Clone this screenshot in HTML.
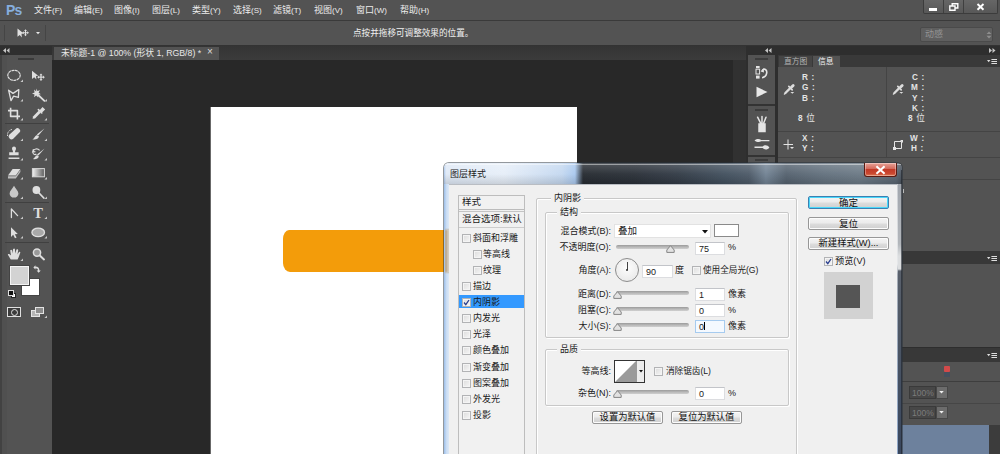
<!DOCTYPE html>
<html lang="zh-CN">
<head>
<meta charset="utf-8">
<title>图层样式</title>
<style>
*{box-sizing:border-box;margin:0;padding:0}
html,body{width:1000px;height:454px;overflow:hidden;background:#282828}
body{position:relative;font-family:"Liberation Sans","Noto Sans CJK SC",sans-serif;font-size:9px;color:#e6e6e6}
.abs{position:absolute}
.t{position:absolute;white-space:nowrap;line-height:12px;height:12px}
svg{position:absolute;overflow:visible}
/* app chrome */
#menubar{left:0;top:0;width:1000px;height:20px;background:#535353}
#optbar{left:0;top:21px;width:1000px;height:24px;background:#535353}
.mi{top:4px;font-size:9px;color:#ececec}
.s{font-size:8px}
#ps{left:6px;top:0px;font-size:15.5px;line-height:20px;height:20px;font-weight:bold;color:#86aede;letter-spacing:-0.8px;transform:scaleX(.9);transform-origin:0 0}
/* dialog */
#dlg{left:444px;top:163px;width:458px;height:300px}
#dbody{left:449px;top:184px;width:448px;height:280px;background:#f0f0f0}
.d{color:#1a1a1a;font-size:9px}
.r{text-align:right}
.ip{font-size:8.2px;font-weight:bold;color:#e4e4e4;letter-spacing:0.2px;word-spacing:1px}
.inp{position:absolute;background:#fff;border:1px solid #dcdde0;border-top-color:#c2c4c9;height:13px}
.inp span{position:absolute;left:3px;top:0px;line-height:12px;font-size:9px;color:#222}
.cb{position:absolute;width:9px;height:9px;background:linear-gradient(135deg,#dcdcdc,#f6f6f6);border:1px solid #b2b3b5;box-shadow:inset 0 0 0 1px #f4f4f4}
.grp{position:absolute;border:1px solid #c8c8c8;box-shadow:inset 1px 1px 0 #fff,1px 1px 0 #fff;border-radius:2px}
.gl{position:absolute;background:#f0f0f0;padding:0 3px;line-height:12px;height:12px;white-space:nowrap;color:#1a1a1a}
.track{position:absolute;height:4px;background:linear-gradient(#9b9b9b,#bdbdbd 60%,#cfcfcf);border-radius:2px}
.btn{position:absolute;border:1px solid #979797;border-radius:2px;background:linear-gradient(#f4f4f4 0%,#ebebeb 48%,#dddddd 52%,#cfcfcf 100%);box-shadow:inset 0 0 0 1px #fcfcfc;color:#111;text-align:center;white-space:nowrap}
.li{left:0;width:66px;height:13px}
</style>
</head>
<body>
<!-- menubar -->
<div id="menubar" class="abs">
  <div id="ps" class="t">Ps</div>
  <div class="t mi" style="left:34px">文件<span class="s">(F)</span></div>
  <div class="t mi" style="left:74px">编辑<span class="s">(E)</span></div>
  <div class="t mi" style="left:114px">图像<span class="s">(I)</span></div>
  <div class="t mi" style="left:152px">图层<span class="s">(L)</span></div>
  <div class="t mi" style="left:192px">类型<span class="s">(Y)</span></div>
  <div class="t mi" style="left:233px">选择<span class="s">(S)</span></div>
  <div class="t mi" style="left:273px">滤镜<span class="s">(T)</span></div>
  <div class="t mi" style="left:314px">视图<span class="s">(V)</span></div>
  <div class="t mi" style="left:356px">窗口<span class="s">(W)</span></div>
  <div class="t mi" style="left:400px">帮助<span class="s">(H)</span></div>
</div>
<div class="abs" style="left:0;top:20px;width:1000px;height:1px;background:#3a3a3a"></div>
<div id="optbar" class="abs">
  <div class="t" style="left:353px;top:6px;font-size:8.6px;color:#f0f0f0">点按并拖移可调整效果的位置。</div>
</div>
<div class="abs" style="left:0;top:45px;width:1000px;height:1px;background:#333"></div>
<!-- window buttons -->
<div class="abs" style="left:923px;top:0;width:75px;height:14px;background:linear-gradient(#666,#585858);border:1px solid #3c3c3c;border-top:none;border-radius:0 0 2px 2px"></div>
<div class="abs" style="left:943px;top:0;width:1px;height:13px;background:#3f3f3f"></div>
<div class="abs" style="left:963px;top:0;width:1px;height:13px;background:#3f3f3f"></div>
<div class="abs" style="left:929px;top:8px;width:8px;height:2.500px;background:#fff"></div>
<svg style="left:949px;top:3px" width="10" height="8" viewBox="0 0 10 8"><path d="M3.200 0.800H8.800V5H3.200Z" fill="none" stroke="#fff" stroke-width="1.400"/><path d="M0.800 3H6V7.200H0.800Z" fill="#5e5e5e" stroke="#fff" stroke-width="1.400"/></svg>
<svg style="left:976px;top:3px" width="9" height="8" viewBox="0 0 9 8"><path d="M1.500 1L7.500 6.800M7.500 1L1.500 6.800" stroke="#fff" stroke-width="1.900"/></svg>
<!-- options bar widgets -->
<svg style="left:17px;top:28px" width="14" height="10" viewBox="0 0 14 10"><path d="M0.500 0.500V8.800L2.700 7L4.900 9.400L4.500 5.800L6.700 5.600Z" fill="#e0e0e0"/><path d="M10 2.800l1.600 1.800h-1v1.400h1.400v-1l1.800 1.600-1.800 1.600v-1h-1.400v1.400h1l-1.600 1.800-1.600-1.800h1v-1.400h-1.400v1l-1.800-1.600 1.800-1.600v1h1.400v-1.400h-1z" fill="#e0e0e0" transform="translate(-0.500,-1.200) scale(0.900)"/></svg>
<svg style="left:36px;top:32px" width="4" height="2.500" viewBox="0 0 5 3"><path d="M0 0h5L2.500 2.800z" fill="#e6e6e6"/></svg>
<div class="abs" style="left:4px;top:25px;width:1px;height:16px;background:#454545"></div>
<div class="abs" style="left:45px;top:25px;width:1px;height:16px;background:#454545"></div>
<div class="abs" style="left:920px;top:27px;width:73px;height:15px;background:#5f5f5f;border:1px solid #4a4a4a;border-radius:2px"></div>
<div class="t" style="left:925px;top:28px;font-size:9px;color:#949494">动感</div>
<svg style="left:986px;top:31px" width="6" height="8" viewBox="0 0 6 8"><path d="M0.500 3L3 0.400L5.500 3ZM0.500 4.800L3 7.400L5.500 4.800Z" fill="#8e8e8e"/></svg>

<!-- tab bar -->
<div class="abs" style="left:52px;top:46px;width:694px;height:14px;background:linear-gradient(#343434,#3b3b3b)"></div>
<div class="abs" style="left:54px;top:47px;width:165px;height:13px;background:#535353"></div>
<div class="t" style="left:61px;top:47px;font-size:8.75px;color:#e8e8e8">未标题-1 @ 100% (形状 1, RGB/8) *</div>
<div class="t" style="left:207px;top:46px;font-size:10px;color:#ddd">×</div>

<!-- left toolbar -->
<div class="abs" style="left:0;top:46px;width:52px;height:9px;background:#2f2f2f"></div>
<svg style="left:3px;top:48px" width="6.500" height="5" viewBox="0 0 6.500 5"><path d="M3 0v5L0 2.500zM6.500 0v5L3.500 2.500z" fill="#c4c4c4"/></svg>
<div class="abs" style="left:0;top:55px;width:52px;height:399px;background:#535353"></div>
<div class="abs" style="left:0;top:55px;width:2px;height:399px;background:#424242"></div>
<div class="abs" style="left:2px;top:55px;width:5px;height:399px;background:#505050"></div>
<div class="abs" style="left:18px;top:58px;width:16px;height:2px;background:#3a3a3a"></div>
<div class="abs" style="left:5px;top:123px;width:44px;height:1px;background:#404040"></div>
<div class="abs" style="left:5px;top:202px;width:44px;height:1px;background:#404040"></div>
<div class="abs" style="left:5px;top:242px;width:44px;height:1px;background:#404040"></div>
<svg style="left:0;top:55px" width="53" height="270" viewBox="0 55 53 270">
<g fill="none" stroke="#dedede" stroke-width="1.2" stroke-linecap="round" stroke-linejoin="round">
<!-- elliptical marquee -->
<ellipse cx="14" cy="75.3" rx="6.2" ry="5" stroke-dasharray="2 1.4"/>
<!-- polygon lasso -->
<path d="M8.6 90.2 L13 93.4 L18.8 89.6 L18.4 97.4 L13.6 96.2 L11 100.6 Z" stroke-width="1.3"/>
<!-- crop -->
<path d="M10.6 107.8 V116.4 H20 M8 110.6 H17.4 V119.4" stroke-width="1.6" stroke-linecap="butt"/>
<!-- pen -->
<path d="M11.4 217.6 V209 L17.6 215.6" stroke-width="1.3"/>
</g>
<g fill="#dedede">
<!-- move tool -->
<path d="M32 70.8 L32 79 L34.2 77.2 L36.4 79.6 L36 76 L38.2 75.8Z"/>
<path d="M41 73.4l1.6 1.8h-1v1.4h1.4v-1l1.8 1.6-1.8 1.6v-1h-1.4v1.4h1l-1.6 1.8-1.6-1.8h1v-1.4h-1.4v1l-1.8-1.6 1.8-1.6v1h1.4v-1.4h-1z"/>
<!-- magic wand -->
<path d="M36.4 88.4l1 2.6 2.6-.8-1.4 2.4 2.2 1.6-2.8.4.2 2.8-2-2-2.2 1.8.6-2.8-2.6-1 2.6-1-.6-2.8 2.2 1.8z"/>
<path d="M38.2 95 L44.4 100.8" stroke="#dedede" stroke-width="1.8" stroke-linecap="round"/>
<!-- eyedropper -->
<path d="M32.6 118.8 L33 116.4 L38.6 110.8 L40.6 112.8 L35 118.4Z"/>
<path d="M38.4 109.6 L41.8 113 M39.8 111.4 L42.6 108.2 L44 109.6 L41 112.4" stroke="#dedede" stroke-width="1.6" stroke-linecap="round"/>
<!-- healing brush (bandage) -->
<path d="M9.6 138.4 a2.6 2.6 0 0 1 -0.4 -3.6 L15.6 129 a2.6 2.6 0 0 1 3.8 3.6 L13 139 a2.6 2.6 0 0 1 -3.4 -.6Z"/>
<path d="M7.6 136 C7 132.6 9 130 12.2 129.4" fill="none" stroke="#dedede" stroke-width="1" stroke-dasharray="1.4 1"/>
<!-- brush -->
<path d="M44.4 128.6 L38.4 135.6 L36.8 134.4 Z"/>
<path d="M37 135 L39 136.6 C38.4 139 35.6 140 32.4 139.4 C34.6 138.4 34.4 136 37 135Z"/>
<!-- stamp -->
<path d="M12 148.6 a2 2 0 0 1 4 0 c0 1.4 -1 2 -1 3.6 h3.6 v3 h-9.4 v-3 h3.8 c0 -1.600 -1 -2.200 -1 -3.600Z M8.600 157.400 h10.800 v1.600 h-10.800Z"/>
<!-- history brush -->
<path d="M44.600 148.400 L38.400 155.600 L37 154.400Z"/>
<path d="M37.200 155 L38.800 156.400 C38.200 158.600 35.800 159.600 33 159 C35 158 34.800 156 37.200 155Z"/>
<path d="M39.600 150.400 C37.600 148 33.600 148.600 33 151.800 C32.600 154.200 35 155.400 36.400 154 M33.400 149.200 l-.8 2.800 2.800 -.4" fill="none" stroke="#dedede" stroke-width="1.100"/>
<!-- eraser -->
<path d="M8 175.600 L12.600 169 H20.400 L15.800 175.600Z"/>
<path d="M8 176.200 H15.800 L20.400 169.800 V172 L15.800 178.400 H8Z" fill="#bdbdbd"/>
<!-- blur drop -->
<path d="M14 185.800 C15.400 188.600 18.400 190.800 18.400 193.600 a4.400 4 0 0 1 -8.800 0 C9.600 190.800 12.600 188.600 14 185.800Z" fill="#c8c8c8"/>
<!-- dodge -->
<circle cx="36.400" cy="190" r="3.900"/>
<path d="M39 193 L43.800 198" stroke="#dedede" stroke-width="1.800" stroke-linecap="round"/>
<!-- path selection arrow -->
<path d="M11 227.200 V237 L13.200 234.800 L15 238.200 L16.600 237.400 L14.800 234.200 L17.800 234Z"/>
<!-- ellipse shape -->
<ellipse cx="38.200" cy="232.400" rx="6.300" ry="4.300" fill="#a9a9a9" stroke="#e0e0e0" stroke-width="1.300"/>
<!-- hand -->
<path d="M10.800 259.600 C9.400 257 8.400 255.600 7.800 254.400 C8.600 253.400 9.800 254 11 255.600 L10.200 250.400 C10.800 249.400 11.800 249.600 12.200 250.600 L12.800 253.600 L13 249.200 C13.800 248.200 14.800 248.400 15 249.400 L15.200 253.600 L16.400 249.800 C17.200 249 18.200 249.400 18.200 250.400 L17.400 254.400 L19 252 C19.800 251.400 20.600 252 20.200 253 C19.200 255.400 18.600 257.600 17.600 259.600Z"/>
<!-- zoom -->
<circle cx="37" cy="252.600" r="3.600" fill="#9a9a9a" stroke="#dedede" stroke-width="1.500"/>
<path d="M39.800 255.600 L44 259.400" stroke="#dedede" stroke-width="2" stroke-linecap="round"/>
<!-- swap arrows -->
<path d="M33.400 267.400l2-2.200v1.400c2.600 0 4 1.400 4 4h1.400l-2.200 2.200-2-2.200h1.400c0-1.600-.8-2.400-2.600-2.400v1.400z"/>
<path d="M23 82v-2.6l-2.6 2.6z" fill="#c8c8c8"/><path d="M23 101.5v-2.6l-2.6 2.6z" fill="#c8c8c8"/><path d="M23 120.5v-2.6l-2.6 2.6z" fill="#c8c8c8"/><path d="M47 101.5v-2.6l-2.6 2.6z" fill="#c8c8c8"/><path d="M47 120.5v-2.6l-2.6 2.6z" fill="#c8c8c8"/><path d="M23 141v-2.6l-2.6 2.6z" fill="#c8c8c8"/><path d="M47 141v-2.6l-2.6 2.6z" fill="#c8c8c8"/><path d="M23 160.5v-2.6l-2.6 2.6z" fill="#c8c8c8"/><path d="M47 160.5v-2.6l-2.6 2.6z" fill="#c8c8c8"/><path d="M23 179.5v-2.6l-2.6 2.6z" fill="#c8c8c8"/><path d="M47 179.5v-2.6l-2.6 2.6z" fill="#c8c8c8"/><path d="M23 199v-2.6l-2.6 2.6z" fill="#c8c8c8"/><path d="M47 199v-2.6l-2.6 2.6z" fill="#c8c8c8"/><path d="M23 219v-2.6l-2.6 2.6z" fill="#c8c8c8"/><path d="M47 219v-2.6l-2.6 2.6z" fill="#c8c8c8"/><path d="M23 238.5v-2.6l-2.6 2.6z" fill="#c8c8c8"/><path d="M47 238.5v-2.6l-2.6 2.6z" fill="#c8c8c8"/><path d="M23 261v-2.6l-2.6 2.6z" fill="#c8c8c8"/><path d="M47 318v-2.6l-2.6 2.6z" fill="#c8c8c8"/>
</g>
<!-- T -->
<text x="33.200" y="217.600" font-family="Liberation Serif,serif" font-size="14.500" font-weight="bold" fill="#dedede">T</text>
<!-- gradient -->
<defs><linearGradient id="gr" x1="0" x2="1"><stop offset="0" stop-color="#f4f4f4"/><stop offset="1" stop-color="#5c5c5c"/></linearGradient></defs>
<rect x="32.400" y="168.600" width="12" height="8.200" fill="url(#gr)" stroke="#d8d8d8" stroke-width="1"/>
</svg>
<!-- colour swatches -->
<div class="abs" style="left:21px;top:278px;width:19px;height:18px;background:#fff;border:1px solid #444;box-shadow:inset 0 0 0 1px #fff"></div>
<div class="abs" style="left:10px;top:266px;width:19px;height:19px;background:#d3d3d3;border:1px solid #f4f4f4;box-shadow:0 0 0 1px #444"></div>
<div class="abs" style="left:11px;top:293px;width:5px;height:5px;background:#fff;border:1px solid #222"></div>
<div class="abs" style="left:8px;top:290px;width:6px;height:6px;background:#111;border:1px solid #ddd"></div>
<!-- quick mask / screen mode -->
<div class="abs" style="left:7px;top:307px;width:14px;height:10px;border:1px solid #e0e0e0;background:#3c3c3c"></div>
<div class="abs" style="left:10.500px;top:308.500px;width:7px;height:7px;border:1px solid #e0e0e0;border-radius:50%"></div>
<div class="abs" style="left:31px;top:310px;width:9px;height:7px;background:#b4b4b4;border:1px solid #e4e4e4"></div>
<div class="abs" style="left:35px;top:307px;width:9px;height:7px;background:#8c8c8c;border:1px solid #e4e4e4"></div>

<!-- document canvas -->
<div class="abs" style="left:211px;top:107px;width:366px;height:347px;background:#fff;box-shadow:-1px 0 0 rgba(255,255,255,.3)"></div>
<div class="abs" style="left:283px;top:230px;width:170px;height:42px;background:#f39c0a;border-radius:6px 0 0 7px / 9px 0 0 9px"></div>

<!-- right panels -->
<div class="abs" style="left:746px;top:46px;width:254px;height:408px;background:#2e2e2e"></div>
<svg style="left:765px;top:48px" width="6.500" height="5" viewBox="0 0 6.500 5"><path d="M3 0v5L0 2.500zM6.500 0v5L3.500 2.500z" fill="#c4c4c4"/></svg>
<svg style="left:989px;top:48px" width="6.500" height="5" viewBox="0 0 6.500 5"><path d="M0 0v5L3 2.500zM3.500 0v5L6.500 2.500z" fill="#c4c4c4"/></svg>
<div class="abs" style="left:748px;top:55px;width:27px;height:399px;background:#535353"></div>
<div class="abs" style="left:748px;top:104px;width:27px;height:2px;background:#333"></div>
<div class="abs" style="left:733px;top:60px;width:13px;height:394px;background:#313131"></div>
<div class="abs" style="left:748px;top:155px;width:27px;height:2px;background:#333"></div>
<div class="abs" style="left:755px;top:58px;width:13px;height:2px;background:#3c3c3c"></div>
<div class="abs" style="left:755px;top:109px;width:13px;height:2px;background:#3c3c3c"></div>
<div class="abs" style="left:755px;top:159px;width:13px;height:2px;background:#3c3c3c"></div>
<!-- strip icons -->
<svg style="left:756px;top:66px" width="12" height="14" viewBox="0 0 12 14"><g fill="#e4e4e4"><rect x="0" y="0" width="3.6" height="2.2"/><rect x="0" y="3.2" width="3.6" height="4.8" fill="none" stroke="#e4e4e4" stroke-width="1"/><rect x="0" y="9.6" width="3.6" height="3"/></g><path d="M6 5 C8 1.5 11.5 3.5 10.6 7.5 C10 10 8 11.4 6 11.6" fill="none" stroke="#e4e4e4" stroke-width="1.6"/><path d="M4.6 5.6 L7.6 2.2 L8 6.4Z" fill="#e4e4e4"/></svg>
<svg style="left:756px;top:86px" width="12" height="12" viewBox="0 0 12 12"><path d="M0.5 0.8 L11.5 6 L0.5 11.2Z" fill="#e8e8e8"/></svg>
<svg style="left:755px;top:116px" width="14" height="16" viewBox="0 0 14 16"><path d="M4 8 H10 V15.5 H4Z M2.6 1.2 L5.6 7.2 M7 0.6 V7 M11 1.2 L8.6 7.2" fill="#e4e4e4" stroke="#e4e4e4" stroke-width="1.5" stroke-linecap="round"/></svg>
<svg style="left:754px;top:137px" width="16" height="14" viewBox="0 0 16 14"><path d="M0.5 3.4 C3 1.6 5.5 1.8 7.2 3 H15.4 V4.2 H7.2 C5.5 5.4 3 5.4 0.5 3.4Z M0.5 9.6 H8.6 C10.4 7.6 13.6 7.8 15.4 10.4 C13.6 13 10.4 13 8.6 11 H0.5Z" fill="#e4e4e4"/></svg>

<!-- info panel -->
<div class="abs" style="left:778px;top:55px;width:222px;height:12px;background:#393939"></div>
<div class="abs" style="left:779px;top:56px;width:33px;height:11px;background:#454545"></div>
<div class="abs" style="left:813px;top:56px;width:27px;height:11px;background:#535353"></div>
<div class="t" style="left:784px;top:55.500px;font-size:7.8px;color:#b4b4b4">直方图</div>
<div class="t" style="left:818px;top:55.500px;font-size:7.8px;color:#f2f2f2">信息</div>
<svg style="left:987px;top:59px" width="10" height="6" viewBox="0 0 10 6"><path d="M0 1h3.4L1.7 3.2z" fill="#ddd"/><path d="M4.4 0.5H10M4.4 2.5H10M4.4 4.5H10" stroke="#ddd" stroke-width="1"/></svg>
<div class="abs" style="left:778px;top:67px;width:222px;height:184px;background:#535353"></div>
<div class="abs" style="left:886px;top:67px;width:1px;height:90px;background:#444"></div>
<div class="abs" style="left:778px;top:131px;width:222px;height:1px;background:#444"></div>
<div class="abs" style="left:778px;top:157px;width:222px;height:1px;background:#444"></div>
<div class="abs" style="left:778px;top:179px;width:222px;height:1px;background:#444"></div>
<div class="t ip" style="left:802px;top:72px">R :</div>
<div class="t ip" style="left:802px;top:82px">G :</div>
<div class="t ip" style="left:802px;top:93px">B :</div>
<div class="t ip" style="left:798px;top:112px">8 <span style="font-size:8.6px;font-weight:normal">位</span></div>
<div class="t ip" style="left:912px;top:71.500px">C :</div>
<div class="t ip" style="left:911px;top:82px">M :</div>
<div class="t ip" style="left:912px;top:92.500px">Y :</div>
<div class="t ip" style="left:912px;top:102.500px">K :</div>
<div class="t ip" style="left:908px;top:112px">8 <span style="font-size:8.6px;font-weight:normal">位</span></div>
<div class="t ip" style="left:802px;top:133px">X :</div>
<div class="t ip" style="left:802px;top:143px">Y :</div>
<div class="t ip" style="left:910px;top:133px">W :</div>
<div class="t ip" style="left:911px;top:143px">H :</div>
<!-- eyedroppers -->
<svg style="left:784px;top:83px" width="12" height="12" viewBox="0 0 12 12"><path d="M1.400 10 L6 5.400" stroke="#dcdcdc" stroke-width="2.300" stroke-linecap="round"/><path d="M0.300 11.200 L2 9.600" stroke="#dcdcdc" stroke-width="1.200" stroke-linecap="round"/><path d="M4.800 3.400 L8.200 6.800" stroke="#dcdcdc" stroke-width="1.700" stroke-linecap="round"/><path d="M7.400 4.200 L9.200 2.400" stroke="#dcdcdc" stroke-width="2.800" stroke-linecap="round"/><path d="M6.400 9h3.800L8.300 10.800z" fill="#dcdcdc"/></svg>
<svg style="left:893px;top:83px" width="12" height="12" viewBox="0 0 12 12"><path d="M1.400 10 L6 5.400" stroke="#dcdcdc" stroke-width="2.300" stroke-linecap="round"/><path d="M0.300 11.200 L2 9.600" stroke="#dcdcdc" stroke-width="1.200" stroke-linecap="round"/><path d="M4.800 3.400 L8.200 6.800" stroke="#dcdcdc" stroke-width="1.700" stroke-linecap="round"/><path d="M7.400 4.200 L9.200 2.400" stroke="#dcdcdc" stroke-width="2.800" stroke-linecap="round"/><path d="M6.400 9h3.800L8.300 10.800z" fill="#dcdcdc"/></svg>
<svg style="left:783px;top:139px" width="12" height="12" viewBox="0 0 12 12"><path d="M5 0.5V10.5M0.5 5.5H10" stroke="#e4e4e4" stroke-width="1"/><path d="M7 8h4L9 10z" fill="#e4e4e4"/></svg>
<svg style="left:892px;top:139px" width="13" height="12" viewBox="0 0 13 12"><path d="M2.5 2.5H9.5V9.5H2.5Z" fill="none" stroke="#e4e4e4" stroke-width="1"/><path d="M8 1h3v3zM1 8h3v3H1z" fill="#e4e4e4"/></svg>

<div class="abs" style="left:903px;top:189px;width:1px;height:4px;background:#bbb"></div>
<div class="abs" style="left:903px;top:308px;width:2px;height:9px;background:repeating-linear-gradient(180deg,#ccc 0,#ccc 1px,transparent 1px,transparent 2px)"></div>
<div class="abs" style="left:903px;top:390px;width:1px;height:5px;background:repeating-linear-gradient(180deg,#bbb 0,#bbb 1px,transparent 1px,transparent 3px)"></div>
<div class="abs" style="left:903px;top:410px;width:1px;height:5px;background:repeating-linear-gradient(180deg,#bbb 0,#bbb 1px,transparent 1px,transparent 3px)"></div>
<!-- middle panel -->
<div class="abs" style="left:778px;top:251px;width:222px;height:13px;background:#383838"></div>
<svg style="left:987px;top:256px" width="10" height="6" viewBox="0 0 10 6"><path d="M0 1h3.4L1.7 3.2z" fill="#ddd"/><path d="M4.4 0.5H10M4.4 2.5H10M4.4 4.5H10" stroke="#ddd" stroke-width="1"/></svg>
<div class="abs" style="left:778px;top:264px;width:222px;height:83px;background:#535353"></div>
<!-- layers panel -->
<div class="abs" style="left:778px;top:348px;width:222px;height:14px;background:#383838"></div>
<svg style="left:987px;top:353px" width="10" height="6" viewBox="0 0 10 6"><path d="M0 1h3.4L1.7 3.2z" fill="#ddd"/><path d="M4.4 0.5H10M4.4 2.5H10M4.4 4.5H10" stroke="#ddd" stroke-width="1"/></svg>
<div class="abs" style="left:778px;top:362px;width:222px;height:92px;background:#535353"></div>
<div class="abs" style="left:778px;top:381px;width:222px;height:1px;background:#3e3e3e"></div>
<div class="abs" style="left:778px;top:403px;width:222px;height:1px;background:#464646"></div>
<div class="abs" style="left:944px;top:366px;width:6px;height:6px;background:#d24a4a;border-radius:1px"></div>
<div class="abs" style="left:944px;top:372px;width:6px;height:5px;background:#44505e"></div>
<div class="abs" style="left:909px;top:386px;width:27px;height:13px;background:#474747;border:1px solid #3a3a3a"></div>
<div class="t" style="left:912px;top:387px;font-size:8.5px;color:#7c7c7c">100%</div>
<div class="abs" style="left:936px;top:386px;width:12px;height:13px;background:#6c6c6c;border:1px solid #474747"></div>
<svg style="left:939px;top:391px" width="5" height="3" viewBox="0 0 6 4"><path d="M0 0h6L3 3.4z" fill="#f0f0f0"/></svg>
<div class="abs" style="left:909px;top:406px;width:27px;height:13px;background:#474747;border:1px solid #3a3a3a"></div>
<div class="t" style="left:912px;top:407px;font-size:8.5px;color:#7c7c7c">100%</div>
<div class="abs" style="left:936px;top:406px;width:12px;height:13px;background:#6c6c6c;border:1px solid #474747"></div>
<svg style="left:939px;top:411px" width="5" height="3" viewBox="0 0 6 4"><path d="M0 0h6L3 3.4z" fill="#f0f0f0"/></svg>
<div class="abs" style="left:778px;top:425px;width:211px;height:29px;background:#6d819d"></div>
<div class="abs" style="left:989px;top:425px;width:11px;height:29px;background:#3c3c3c"></div>

<!-- dialog -->
<div class="abs" style="left:444px;top:163px;width:458px;height:291px;border-radius:5px 5px 0 0;background:linear-gradient(180deg,rgba(255,255,255,.2) 0,rgba(255,255,255,.04) 11px,rgba(0,0,0,.12) 21px,rgba(0,0,0,0) 22px),linear-gradient(90deg,#a9c6ec 0,#dfe9f6 2px,#e6eef8 60px,#c4d8f0 118px,#a9c8ee 131px,#262b31 139px,#2a3038 190px,#333c47 235px,#42505e 280px,#4d5a68 305px,#728394 322px,#55626f 342px,#63717e 380px,#6b7985 415px,#5a6672 452px,#4a525c 458px);box-shadow:0 0 0 1px rgba(40,50,60,.5)"></div>
<div class="abs" style="left:445px;top:164px;width:456px;height:1px;background:rgba(255,255,255,.45)"></div>
<div class="abs" style="left:444px;top:184px;width:6px;height:270px;background:linear-gradient(90deg,#9dbfe9,#c9dcf3 40%,#e4edf8)"></div>
<div class="abs" style="left:897px;top:184px;width:5px;height:270px;background:linear-gradient(180deg,#a2a7ae 0,#b2b6bb 60px,#dcdee0 72px,#dcdee0 85px,#5a616c 87px,#4c5665 160px,#39475e 270px)"></div>
<div class="abs" style="left:897px;top:184px;width:1px;height:270px;background:linear-gradient(180deg,#c8ccd1 0,#e6e8ea 80px,#a4abb5 90px,#8ea6c8 270px)"></div>
<div class="abs" style="left:901px;top:170px;width:1px;height:284px;background:rgba(30,34,40,.6)"></div>
<div class="abs" style="left:445px;top:228px;width:5px;height:46px;background:linear-gradient(180deg,rgba(190,175,150,0) 0,#bdae96 3px,#bdae96 43px,rgba(190,175,150,0) 46px)"></div>
<div class="abs" style="left:447px;top:230px;width:3px;height:42px;background:linear-gradient(90deg,rgba(226,220,210,.3),#e0dad0)"></div>
<div class="t" style="left:450px;top:168px;font-size:9px;color:#1a1a1a">图层样式</div>
<!-- close button -->
<div class="abs" style="left:864px;top:163px;width:33px;height:14px;border-radius:0 0 3px 3px;border:1px solid #5a1a12;border-top:none;background:linear-gradient(#e8a398 0,#d4685a 45%,#c23a27 50%,#c9462f 80%,#de7a55 100%);box-shadow:inset 0 0 0 1px rgba(255,255,255,.35)"></div>
<svg style="left:876px;top:166px" width="9" height="8" viewBox="0 0 9 8"><path d="M1.2 1 L7.8 7 M7.8 1 L1.2 7" stroke="#fff" stroke-width="2.1" stroke-linecap="square"/></svg>
<div id="dbody" class="abs"></div>
<div class="abs" style="left:449px;top:184px;width:448px;height:1px;background:#b9bdc3"></div>

<!-- style list -->
<div class="abs" style="left:458px;top:195px;width:67px;height:270px;border:1px solid #bdbdbd;border-bottom:none;background:#f1f1f1"></div>
<div class="abs" style="left:459px;top:209px;width:65px;height:1px;background:#bcbcbc"></div>
<div class="abs" style="left:459px;top:211px;width:65px;height:1px;background:#c4c4c4"></div>
<div class="abs" style="left:459px;top:227px;width:65px;height:1px;background:#cdcdcd"></div>
<div class="t d" style="left:462px;top:196px;font-size:9.5px">样式</div>
<div class="t d" style="left:462px;top:213px;font-size:9.5px">混合选项:默认</div>
<div class="abs" style="left:459px;top:295px;width:65px;height:13px;background:#3399ff"></div>
<div class="cb" style="left:462px;top:234px"></div><div class="t d" style="left:473px;top:232px">斜面和浮雕</div>
<div class="cb" style="left:473px;top:250px"></div><div class="t d" style="left:483px;top:248px">等高线</div>
<div class="cb" style="left:473px;top:266px"></div><div class="t d" style="left:483px;top:264px">纹理</div>
<div class="cb" style="left:462px;top:282px"></div><div class="t d" style="left:473px;top:280px">描边</div>
<div class="cb" style="left:462px;top:298px"></div><div class="t d" style="left:473px;top:296px">内阴影</div>
<svg style="left:463px;top:299px" width="7" height="7" viewBox="0 0 7 7"><path d="M1 3.5 L2.8 5.6 L6 1" fill="none" stroke="#2a3f8f" stroke-width="1.3"/></svg>
<div class="cb" style="left:462px;top:314px"></div><div class="t d" style="left:473px;top:312px">内发光</div>
<div class="cb" style="left:462px;top:330px"></div><div class="t d" style="left:473px;top:328px">光泽</div>
<div class="cb" style="left:462px;top:346px"></div><div class="t d" style="left:473px;top:344px">颜色叠加</div>
<div class="cb" style="left:462px;top:363px"></div><div class="t d" style="left:473px;top:361px">渐变叠加</div>
<div class="cb" style="left:462px;top:379px"></div><div class="t d" style="left:473px;top:377px">图案叠加</div>
<div class="cb" style="left:462px;top:395px"></div><div class="t d" style="left:473px;top:393px">外发光</div>
<div class="cb" style="left:462px;top:411px"></div><div class="t d" style="left:473px;top:409px">投影</div>

<!-- group boxes -->
<div class="grp" style="left:536px;top:198px;width:261px;height:270px"></div>
<div class="gl" style="left:551px;top:192px;font-size:9px">内阴影</div>
<div class="grp" style="left:545px;top:212px;width:244px;height:126px"></div>
<div class="gl" style="left:557px;top:206px;font-size:9px">结构</div>
<div class="grp" style="left:545px;top:349px;width:244px;height:57px"></div>
<div class="gl" style="left:557px;top:343px;font-size:9px">品质</div>

<!-- structure rows -->
<div class="t d r" style="left:531px;width:80px;top:225px">混合模式(B):</div>
<div class="abs" style="left:614px;top:224px;width:97px;height:14px;background:#fff;border:1px solid #e2e2e2"></div>
<div class="t d" style="left:618px;top:225px;font-size:9.5px">叠加</div>
<svg style="left:702px;top:230px" width="6" height="4" viewBox="0 0 6 4"><path d="M0 0h6L3 3.5z" fill="#111"/></svg>
<div class="abs" style="left:714px;top:224px;width:25px;height:13px;background:#fff;border:1px solid #8a8a8a"></div>

<div class="t d r" style="left:531px;width:80px;top:241px">不透明度(O):</div>
<div class="track" style="left:616px;top:245px;width:73px"></div>
<svg style="left:666px;top:245px" width="9" height="8" viewBox="0 0 9 8"><path d="M4.5 0.7 L8.2 5 V7.4 H0.8 V5 Z" fill="#e2e2e2" stroke="#858585" stroke-width="1"/></svg>
<div class="inp" style="left:695px;top:242px;width:30px"><span>75</span></div>
<div class="t d" style="left:728px;top:241px">%</div>

<div class="t d r" style="left:531px;width:80px;top:264px">角度(A):</div>
<div class="abs" style="left:615px;top:258px;width:24px;height:24px;border-radius:50%;border:1px solid #8c8c8c;background:radial-gradient(circle at 50% 40%,#fdfdfd 0,#ececec 70%,#dcdcdc 100%)"></div>
<div class="abs" style="left:626.500px;top:262px;width:1px;height:8px;background:#444"></div>
<div class="abs" style="left:625.5px;top:269px;width:2px;height:2px;background:#333;border-radius:50%"></div>
<div class="inp" style="left:642px;top:265px;width:31px"><span>90</span></div>
<div class="t d" style="left:675px;top:264px">度</div>
<div class="cb" style="left:692px;top:266px"></div>
<div class="t d" style="left:703px;top:264px;font-size:8.6px">使用全局光(G)</div>

<div class="t d r" style="left:531px;width:80px;top:288px">距离(D):</div>
<div class="track" style="left:616px;top:291px;width:73px"></div>
<svg style="left:613px;top:291px" width="9" height="8" viewBox="0 0 9 8"><path d="M4.5 0.7 L8.2 5 V7.4 H0.8 V5 Z" fill="#e2e2e2" stroke="#858585" stroke-width="1"/></svg>
<div class="inp" style="left:695px;top:288px;width:30px"><span>1</span></div>
<div class="t d" style="left:728px;top:288px">像素</div>

<div class="t d r" style="left:531px;width:80px;top:304px">阻塞(C):</div>
<div class="track" style="left:616px;top:307px;width:73px"></div>
<svg style="left:613px;top:307px" width="9" height="8" viewBox="0 0 9 8"><path d="M4.5 0.7 L8.2 5 V7.4 H0.8 V5 Z" fill="#e2e2e2" stroke="#858585" stroke-width="1"/></svg>
<div class="inp" style="left:695px;top:304px;width:30px"><span>0</span></div>
<div class="t d" style="left:728px;top:304px">%</div>

<div class="t d r" style="left:531px;width:80px;top:320px">大小(S):</div>
<div class="track" style="left:616px;top:323px;width:73px"></div>
<svg style="left:613px;top:323px" width="9" height="8" viewBox="0 0 9 8"><path d="M4.5 0.7 L8.2 5 V7.4 H0.8 V5 Z" fill="#e2e2e2" stroke="#858585" stroke-width="1"/></svg>
<div class="inp" style="left:695px;top:320px;width:30px;border-color:#a6cbef;background:#f4f9ff"><span>0</span><i style="position:absolute;left:8px;top:1px;width:1px;height:8px;background:#000"></i></div>
<div class="t d" style="left:728px;top:320px">像素</div>

<!-- quality -->
<div class="t d r" style="left:531px;width:80px;top:365px">等高线:</div>
<div class="abs" style="left:614px;top:360px;width:31px;height:23px;border:1px solid #333;background:#ececec"></div>
<svg style="left:615px;top:361px" width="21" height="21" viewBox="0 0 21 21"><rect width="21" height="21" fill="#fff"/><path d="M0 21 L21 0 V21 Z" fill="#9a9a9a"/></svg>
<div class="abs" style="left:636px;top:361px;width:1px;height:21px;background:#9a9a9a"></div>
<svg style="left:639px;top:370px" width="4" height="3" viewBox="0 0 4 3"><path d="M0 0h4L2 2.6z" fill="#111"/></svg>
<div class="cb" style="left:654px;top:367px"></div>
<div class="t d" style="left:666px;top:365px;font-size:8.6px">消除锯齿(L)</div>

<div class="t d r" style="left:531px;width:80px;top:387px">杂色(N):</div>
<div class="track" style="left:616px;top:390px;width:73px"></div>
<svg style="left:613px;top:390px" width="9" height="8" viewBox="0 0 9 8"><path d="M4.5 0.7 L8.2 5 V7.4 H0.8 V5 Z" fill="#e2e2e2" stroke="#858585" stroke-width="1"/></svg>
<div class="inp" style="left:695px;top:387px;width:30px"><span>0</span></div>
<div class="t d" style="left:728px;top:387px">%</div>

<div class="btn" style="left:592px;top:411px;width:71px;height:13px;line-height:11px;font-size:9.3px">设置为默认值</div>
<div class="btn" style="left:671px;top:411px;width:71px;height:13px;line-height:11px;font-size:9.3px">复位为默认值</div>

<!-- right buttons -->
<div class="btn" style="left:808px;top:196px;width:81px;height:13px;line-height:11px;font-size:9.5px;border-color:#3c7fb1;box-shadow:inset 0 0 0 1px #48d8fb,0 0 0 0 #000">确定</div>
<div class="btn" style="left:808px;top:217px;width:81px;height:13px;line-height:11px;font-size:9.5px">复位</div>
<div class="btn" style="left:808px;top:237px;width:81px;height:13px;line-height:11px;font-size:9.3px">新建样式(W)...</div>
<div class="cb" style="left:824px;top:257px"></div>
<svg style="left:825px;top:258px" width="7" height="7" viewBox="0 0 7 7"><path d="M1 3.5 L2.8 5.6 L6 1" fill="none" stroke="#2a3f8f" stroke-width="1.3"/></svg>
<div class="t d" style="left:835px;top:255px;font-size:9.2px">预览(V)</div>
<div class="abs" style="left:824px;top:272px;width:49px;height:47px;background:#d2d2d2"></div>
<div class="abs" style="left:836px;top:285px;width:24px;height:23px;background:#555"></div>
</body>
</html>
